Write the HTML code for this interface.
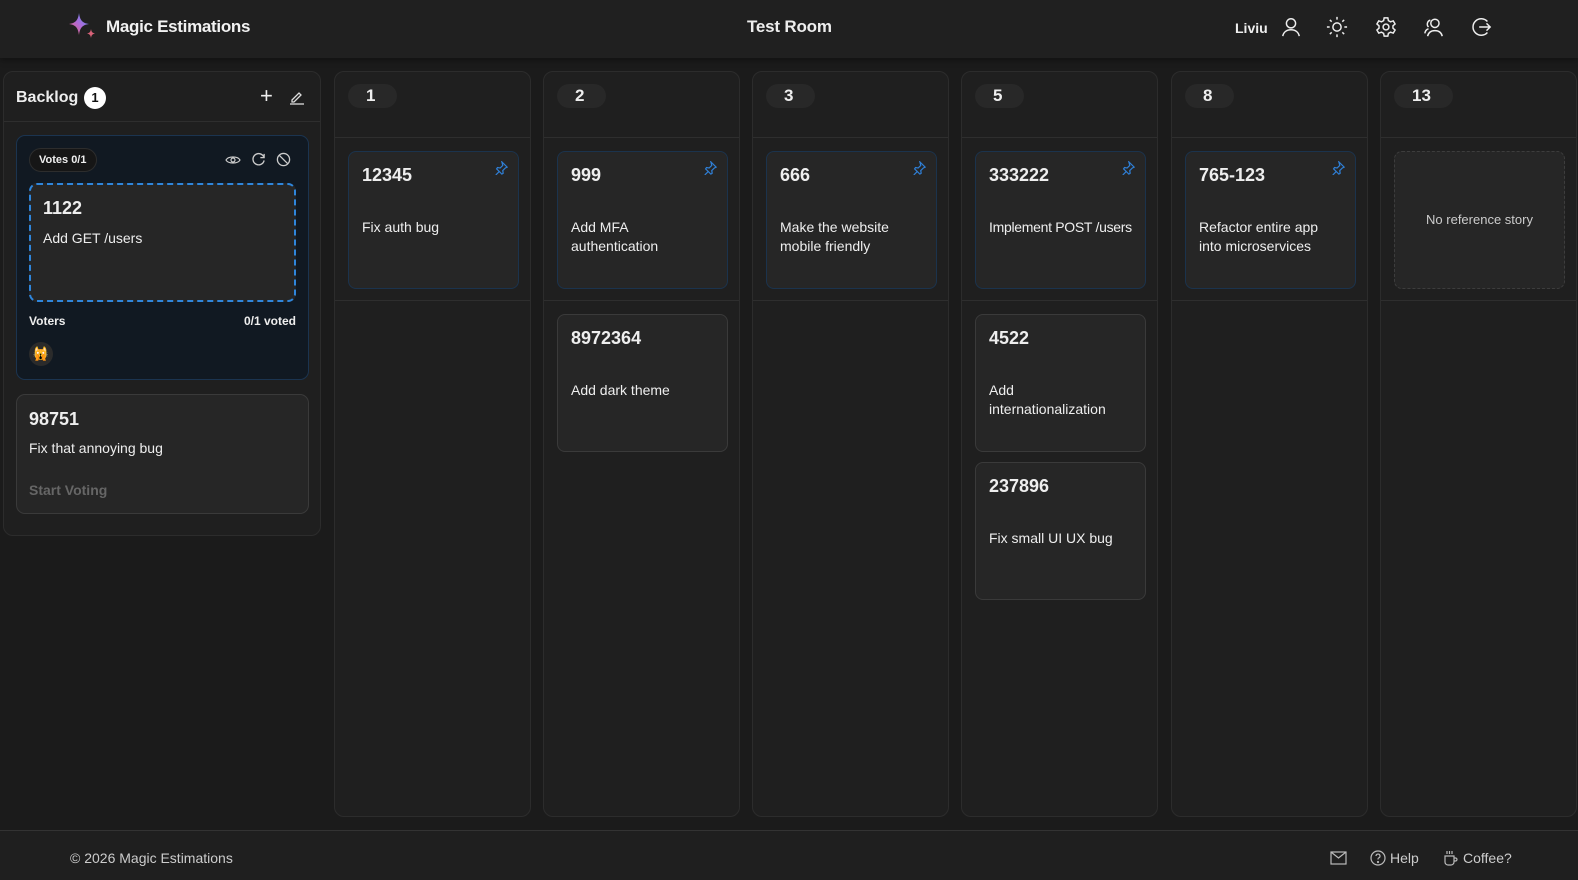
<!DOCTYPE html>
<html><head><meta charset="utf-8"><style>
*{box-sizing:border-box;margin:0;padding:0}
body{width:1578px;height:880px;background:#1b1b1b;font-family:"Liberation Sans",sans-serif;color:#eee;position:relative;overflow:hidden}
.hdr{position:absolute;left:0;top:0;width:1578px;height:58px;background:#202020;box-shadow:0 2px 6px rgba(0,0,0,.4)}
.abs{position:absolute}
.col{position:absolute;top:71px;width:197px;height:746px;background:#1f1f1f;border:1px solid #2c2c2c;border-radius:10px}
.col .line{position:absolute;left:0;right:0;height:1px;background:#2e2e2e}
.pill{position:absolute;left:13px;top:12px;height:24px;border-radius:12px;background:#282828;font-weight:bold;font-size:17px;line-height:24px;padding:0 22px 0 18px}
.card{position:absolute;left:13px;width:171px;height:138px;background:#262626;border:1px solid #3a3a3a;border-radius:8px}
.card.ref{border-color:#1b334d}
.card .n{position:absolute;left:13px;top:13px;font-size:18px;font-weight:bold}
.card .t{position:absolute;left:13px;top:66px;font-size:14px;line-height:19px;width:140px}
.pin{position:absolute;right:10px;top:9px}
</style></head><body>
<div class="hdr">
<svg class="abs" style="left:67px;top:12px" width="32" height="30" viewBox="0 0 32 30"><defs><linearGradient id="g" x1="0" y1="1" x2="1" y2="0"><stop offset="0" stop-color="#e7625a"/><stop offset=".5" stop-color="#b06ad8"/><stop offset="1" stop-color="#4a8ff0"/></linearGradient></defs><path d="M12 1 C13 8 15 11 22 12 C15 13 13 16 12 23 C11 16 9 13 2 12 C9 11 11 8 12 1Z" fill="url(#g)"/><path d="M24 17 C24.5 20 25.5 21 28 21.5 C25.5 22 24.5 23 24 26 C23.5 23 22.5 22 20 21.5 C22.5 21 23.5 20 24 17Z" fill="#d76278"/></svg>
<div class="abs" style="left:106px;top:17px;font-size:17px;font-weight:bold;color:#f2f2f2;letter-spacing:-0.3px">Magic Estimations</div>
<div class="abs" style="left:747px;top:17px;font-size:17px;font-weight:bold;letter-spacing:-0.2px">Test Room</div>
<div class="abs" style="left:1235px;top:20px;font-size:14px;font-weight:bold">Liviu</div>
<svg class="abs" style="left:1280px;top:16px" width="22" height="22" viewBox="0 0 24 24" fill="none" stroke="#eee" stroke-width="1.6"><circle cx="12" cy="8" r="5"/><path d="M3 22c1-5 5-7 9-7s8 2 9 7"/></svg>
<svg class="abs" style="left:1326px;top:16px" width="22" height="22" viewBox="0 0 24 24" fill="none" stroke="#eee" stroke-width="1.6"><circle cx="12" cy="12" r="4.5"/><path d="M12 1v3M12 20v3M1 12h3M20 12h3M4.2 4.2l2 2M17.8 17.8l2 2M4.2 19.8l2-2M17.8 6.2l2-2"/></svg>
<svg class="abs" style="left:1375px;top:16px" width="22" height="22" viewBox="0 0 24 24" fill="none" stroke="#eee" stroke-width="1.6"><circle cx="12" cy="12" r="3.2"/><path d="M10 2h4l.6 3 2.4 1.3 2.9-1 2 3.4-2.3 2v2.6l2.3 2-2 3.4-2.9-1-2.4 1.3-.6 3h-4l-.6-3-2.4-1.3-2.9 1-2-3.4 2.3-2v-2.6l-2.3-2 2-3.4 2.9 1L9.4 5z"/></svg>
<svg class="abs" style="left:1423px;top:16px" width="22" height="22" viewBox="0 0 24 24" fill="none" stroke="#eee" stroke-width="1.6"><circle cx="13" cy="8" r="4.5"/><path d="M5 22c1-4 4-6 8-6s7 2 8 6M8 4.5A4.5 4.5 0 0 0 6 12M2 19c.5-3 2-4.5 4-5"/></svg>
<svg class="abs" style="left:1470px;top:16px" width="22" height="22" viewBox="0 0 24 24" fill="none" stroke="#eee" stroke-width="1.6"><path d="M19 6a9 9 0 1 0 0 12"/><path d="M10 12h12M18 8l4 4-4 4"/></svg>
</div>

<!-- backlog -->
<div class="abs" style="left:3px;top:71px;width:318px;height:465px;background:#1f1f1f;border:1px solid #2c2c2c;border-radius:10px">
<div class="abs" style="left:0;right:0;top:49px;height:1px;background:#2e2e2e"></div>
<div class="abs" style="left:12px;top:17px;font-size:16px;font-weight:bold">Backlog</div>
<div class="abs" style="left:80px;top:15px;width:22px;height:22px;border-radius:11px;background:#fff;color:#111;font-size:13px;font-weight:bold;text-align:center;line-height:22px">1</div>
<div class="abs" style="left:256px;top:11px;font-size:22px;color:#eee">+</div>
<svg class="abs" style="left:285px;top:17px" width="16" height="16" viewBox="0 0 16 16" fill="none" stroke="#ddd" stroke-width="1.3"><path d="M3 11l7-7 2 2-7 7H3z"/><path d="M1 15h14"/></svg>
<div class="abs" style="left:12px;top:63px;width:293px;height:245px;background:#111922;border:1px solid #1b3450;border-radius:9px">
 <div class="abs" style="left:12px;top:12px;height:24px;border:1px solid #2d2d2d;background:#161616;border-radius:12px;font-size:11px;font-weight:bold;line-height:22px;padding:0 9px">Votes 0/1</div>
 <svg class="abs" style="left:208px;top:17px" width="16" height="14" viewBox="0 0 16 14" fill="none" stroke="#ccc" stroke-width="1.2"><path d="M1 7c2-4 12-4 14 0-2 4-12 4-14 0z"/><circle cx="8" cy="7" r="2"/></svg>
 <svg class="abs" style="left:234px;top:16px" width="15" height="15" viewBox="0 0 16 16" fill="none" stroke="#ccc" stroke-width="1.4"><path d="M13.5 5A6 6 0 1 0 14 9"/><path d="M14 2v4h-4"/></svg>
 <svg class="abs" style="left:259px;top:16px" width="15" height="15" viewBox="0 0 16 16" fill="none" stroke="#ccc" stroke-width="1.4"><circle cx="8" cy="8" r="6.5"/><path d="M3.5 3.5l9 9"/></svg>
 <div class="abs" style="left:12px;top:47px;width:267px;height:119px;background:#262626;border:2px dashed #2f86dc;border-radius:8px">
  <div class="abs" style="left:12px;top:13px;font-size:18px;font-weight:bold">1122</div>
  <div class="abs" style="left:12px;top:45px;font-size:14px">Add GET /users</div>
 </div>
 <div class="abs" style="left:12px;top:178px;font-size:12px;font-weight:bold">Voters</div>
 <div class="abs" style="right:12px;top:178px;font-size:12px;font-weight:bold">0/1 voted</div>
 <div class="abs" style="left:12px;top:206px;width:24px;height:24px;border-radius:12px;background:#2b2b2b;text-align:center;font-size:13px;line-height:24px">🙀</div>
</div>
<div class="abs" style="left:12px;top:322px;width:293px;height:120px;background:#262626;border:1px solid #3a3a3a;border-radius:9px">
 <div class="abs" style="left:12px;top:14px;font-size:18px;font-weight:bold">98751</div>
 <div class="abs" style="left:12px;top:45px;font-size:14px">Fix that annoying bug</div>
 <div class="abs" style="left:12px;top:87px;font-size:14px;font-weight:bold;color:#666">Start Voting</div>
</div>
</div>

<div class="col" style="left:334px"><div class="line" style="top:65px"></div><div class="line" style="top:228px"></div><div class="pill">1</div>
<div class="card ref" style="top:79px"><div class="n">12345</div><div class="t">Fix auth bug</div><svg class="pin" width="14" height="14" viewBox="0 0 16 16" fill="none" stroke="#2f7fd6" stroke-width="1.4"><path d="M9 1l6 6-2 1-3 3 .5 3-1.5 1-3-3-4 4 4-4-3-3 1-1.5 3 .5 3-3z"/></svg></div></div>

<div class="col" style="left:543px"><div class="line" style="top:65px"></div><div class="line" style="top:228px"></div><div class="pill">2</div>
<div class="card ref" style="top:79px"><div class="n">999</div><div class="t">Add MFA authentication</div><svg class="pin" width="14" height="14" viewBox="0 0 16 16" fill="none" stroke="#2f7fd6" stroke-width="1.4"><path d="M9 1l6 6-2 1-3 3 .5 3-1.5 1-3-3-4 4 4-4-3-3 1-1.5 3 .5 3-3z"/></svg></div>
<div class="card" style="top:242px"><div class="n">8972364</div><div class="t">Add dark theme</div></div></div>

<div class="col" style="left:752px"><div class="line" style="top:65px"></div><div class="line" style="top:228px"></div><div class="pill">3</div>
<div class="card ref" style="top:79px"><div class="n">666</div><div class="t">Make the website mobile friendly</div><svg class="pin" width="14" height="14" viewBox="0 0 16 16" fill="none" stroke="#2f7fd6" stroke-width="1.4"><path d="M9 1l6 6-2 1-3 3 .5 3-1.5 1-3-3-4 4 4-4-3-3 1-1.5 3 .5 3-3z"/></svg></div></div>

<div class="col" style="left:961px"><div class="line" style="top:65px"></div><div class="line" style="top:228px"></div><div class="pill">5</div>
<div class="card ref" style="top:79px"><div class="n">333222</div><div class="t" style="width:160px;letter-spacing:-0.3px">Implement POST /users</div><svg class="pin" width="14" height="14" viewBox="0 0 16 16" fill="none" stroke="#2f7fd6" stroke-width="1.4"><path d="M9 1l6 6-2 1-3 3 .5 3-1.5 1-3-3-4 4 4-4-3-3 1-1.5 3 .5 3-3z"/></svg></div>
<div class="card" style="top:242px"><div class="n">4522</div><div class="t" style="width:125px">Add internationalization</div></div>
<div class="card" style="top:390px"><div class="n">237896</div><div class="t">Fix small UI UX bug</div></div></div>

<div class="col" style="left:1171px"><div class="line" style="top:65px"></div><div class="line" style="top:228px"></div><div class="pill">8</div>
<div class="card ref" style="top:79px"><div class="n">765-123</div><div class="t" style="width:130px">Refactor entire app into microservices</div><svg class="pin" width="14" height="14" viewBox="0 0 16 16" fill="none" stroke="#2f7fd6" stroke-width="1.4"><path d="M9 1l6 6-2 1-3 3 .5 3-1.5 1-3-3-4 4 4-4-3-3 1-1.5 3 .5 3-3z"/></svg></div></div>

<div class="col" style="left:1380px"><div class="line" style="top:65px"></div><div class="line" style="top:228px"></div><div class="pill">13</div>
<div class="card" style="top:79px;border:1px dashed #3d3d3d"><div class="abs" style="left:0;right:0;top:60px;text-align:center;font-size:13px;color:#ccc">No reference story</div></div></div>

<div class="abs" style="left:0;top:830px;width:1578px;height:1px;background:#333"></div>
<div class="abs" style="left:0;top:831px;width:1578px;height:49px;background:#1f1f1f"></div>
<div class="abs" style="left:70px;top:850px;font-size:14px;color:#ccc">© 2026 Magic Estimations</div>
<svg class="abs" style="left:1330px;top:851px" width="17" height="14" viewBox="0 0 17 14" fill="none" stroke="#bbb" stroke-width="1.2"><rect x="1" y="1" width="15" height="12"/><path d="M1 1l7.5 6L16 1"/></svg>
<svg class="abs" style="left:1370px;top:850px" width="16" height="16" viewBox="0 0 16 16" fill="none" stroke="#bbb" stroke-width="1.2"><circle cx="8" cy="8" r="7"/><path d="M6 6a2 2 0 1 1 2.5 2c-.5.2-.5.7-.5 1.5"/><circle cx="8" cy="12" r=".5"/></svg>
<div class="abs" style="left:1390px;top:850px;font-size:14px;color:#ccc">Help</div>
<svg class="abs" style="left:1443px;top:849px" width="16" height="18" viewBox="0 0 16 18" fill="none" stroke="#bbb" stroke-width="1.2"><path d="M2 7h9v6a3 3 0 0 1-3 3H5a3 3 0 0 1-3-3z"/><path d="M11 9h1.5a1.5 1.5 0 0 1 0 3H11M4 2v3M6.5 2v3M9 2v3"/></svg>
<div class="abs" style="left:1463px;top:850px;font-size:14px;color:#ccc">Coffee?</div>
</body></html>
